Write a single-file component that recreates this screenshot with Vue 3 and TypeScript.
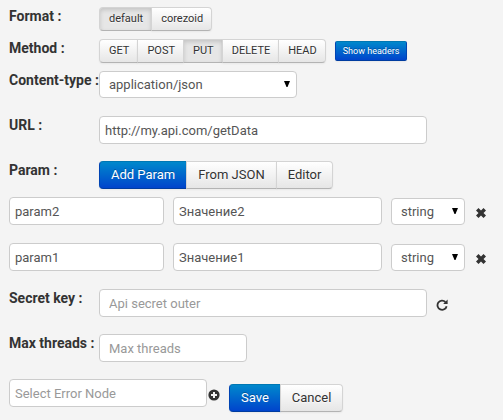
<script setup lang="ts">
import { ref } from 'vue'

interface Param {
  id: number
  name: string
  value: string
  type: string
}

const formats = ['default', 'corezoid']
const methods = ['GET', 'POST', 'PUT', 'DELETE', 'HEAD']
const types = ['string', 'number', 'boolean', 'object', 'array']

const format = ref('default')
const method = ref('PUT')
const contentType = ref('application/json')
const url = ref('http://my.api.com/getData')
const secret = ref('')
const maxThreads = ref('')
const errorNode = ref('')
const params = ref<Param[]>([
  { id: 2, name: 'param2', value: 'Значение2', type: 'string' },
  { id: 1, name: 'param1', value: 'Значение1', type: 'string' },
])

function addParam() {
  const id = Math.max(0, ...params.value.map((p) => p.id)) + 1
  params.value.unshift({ id, name: '', value: '', type: 'string' })
}

function removeParam(id: number) {
  params.value = params.value.filter((p) => p.id !== id)
}
</script>

<template>
  <form class="form" @submit.prevent>
    <div class="row tight">
      <span id="format-label" class="label">Format :</span>
      <div class="group small" role="group" aria-labelledby="format-label">
        <button
          v-for="f in formats"
          :key="f"
          type="button"
          class="btn"
          :class="{ active: f === format }"
          :aria-pressed="f === format"
          @click="format = f"
        >{{ f }}</button>
      </div>
    </div>

    <div class="row tight">
      <span id="method-label" class="label">Method :</span>
      <div class="group small" role="group" aria-labelledby="method-label">
        <button
          v-for="m in methods"
          :key="m"
          type="button"
          class="btn"
          :class="{ active: m === method }"
          :aria-pressed="m === method"
          @click="method = m"
        >{{ m }}</button>
      </div>
      <button type="button" class="btn primary mini">Show headers</button>
    </div>

    <div class="row">
      <label class="label" for="content-type">Content-type :</label>
      <div class="select content-type">
        <select id="content-type" v-model="contentType">
          <option>application/json</option>
          <option>application/xml</option>
        </select>
        <svg class="arrow" viewBox="0 0 6 6" aria-hidden="true"><path d="M0 0H6L3.5 6H2.5Z" /></svg>
      </div>
    </div>

    <div class="row">
      <label class="label" for="url">URL :</label>
      <input id="url" v-model="url" class="field wide" type="text" />
    </div>

    <div class="row params-head">
      <span id="param-label" class="label">Param :</span>
      <div class="group" role="group" aria-labelledby="param-label">
        <button type="button" class="btn primary" @click="addParam">Add Param</button>
        <button type="button" class="btn">From JSON</button>
        <button type="button" class="btn">Editor</button>
      </div>
    </div>

    <div v-for="p in params" :key="p.id" class="param">
      <input v-model="p.name" class="field name" type="text" aria-label="Name" />
      <input v-model="p.value" class="field value" type="text" aria-label="Value" />
      <div class="select type">
        <select v-model="p.type" aria-label="Type">
          <option v-for="t in types" :key="t">{{ t }}</option>
        </select>
        <svg class="arrow" viewBox="0 0 6 6" aria-hidden="true"><path d="M0 0H6L3.5 6H2.5Z" /></svg>
      </div>
      <button type="button" class="icon" aria-label="Remove" @click="removeParam(p.id)">
        <svg viewBox="0 0 12 12"><path d="M3.5 1 6 3.5 8.5 1 11 3.5 8.5 6 11 8.5 8.5 11 6 8.5 3.5 11 1 8.5 3.5 6 1 3.5Z" /></svg>
      </button>
    </div>

    <div class="row">
      <label class="label" for="secret">Secret key :</label>
      <input id="secret" v-model="secret" class="field wide indented" type="text" placeholder="Api secret outer" />
      <button type="button" class="icon refresh" aria-label="Refresh">
        <svg viewBox="0 0 12 12">
          <path d="M9.4 3A4.6 4.6 0 1 0 10.6 7.2" fill="none" stroke="#333" stroke-width="1.8" />
          <path d="M11.6 0.6V5H7.2Z" />
        </svg>
      </button>
    </div>

    <div class="row">
      <label class="label" for="threads">Max threads :</label>
      <input id="threads" v-model="maxThreads" class="field threads indented" type="text" placeholder="Max threads" />
    </div>

    <div class="footer">
      <input v-model="errorNode" class="field node" type="text" placeholder="Select Error Node" aria-label="Select Error Node" />
      <button type="button" class="icon add" aria-label="Add node">
        <svg viewBox="0 0 12 12">
          <circle cx="6" cy="6" r="5.6" />
          <path d="M6 3V9M3 6H9" fill="none" stroke="#f4f4f4" stroke-width="2" />
        </svg>
      </button>
      <div class="group actions">
        <button type="submit" class="btn primary">Save</button>
        <button type="button" class="btn">Cancel</button>
      </div>
    </div>
  </form>
</template>

<style>
body {
  margin: 0;
  background: #f4f4f4;
}
</style>

<style scoped>
.form {
  padding: 7px 9px;
  font: 13px/18px Roboto, "Liberation Sans", sans-serif;
  color: #333;
}

.row,
.param,
.footer {
  display: flex;
  align-items: flex-start;
  margin-bottom: 17px;
}

.row.tight {
  margin-bottom: 8px;
}

.row.params-head {
  margin-bottom: 8px;
}

.label {
  flex: 0 0 90px;
  font-size: 14px;
  font-weight: 700;
  white-space: nowrap;
}

.field,
select {
  box-sizing: border-box;
  width: 100%;
  height: 28px;
  margin: 0;
  padding: 0 5px;
  border: 1px solid #ccc;
  border-radius: 4px;
  background: #fff;
  color: #555;
  font: inherit;
}

.field {
  min-width: 0;
}

.field.indented {
  padding-left: 9px;
}

.field::placeholder {
  color: #999;
  opacity: 1;
}

select {
  display: block;
  height: 27px;
  padding: 0 16px 0 9px;
  appearance: none;
}

.select {
  position: relative;
}

.arrow {
  position: absolute;
  top: 10px;
  right: 7px;
  width: 6px;
  height: 6px;
  fill: #000;
  pointer-events: none;
}

.content-type {
  flex: 0 1 198px;
  margin-bottom: 1px;
}

.wide {
  flex: 0 1 328px;
}

.threads {
  flex: 0 1 148px;
}

.group {
  display: flex;
}

.btn {
  box-sizing: border-box;
  height: 28px;
  margin: 0;
  padding: 0 11px;
  border: 1px solid #d4d4d4;
  border-bottom-color: #b3b3b3;
  border-radius: 0;
  background: linear-gradient(#fff, #e6e6e6);
  box-shadow: 0 1px 2px rgba(0, 0, 0, 0.05);
  color: #333;
  font: inherit;
  text-shadow: 0 1px 1px rgba(255, 255, 255, 0.75);
  white-space: nowrap;
  cursor: pointer;
}

.group .btn + .btn {
  margin-left: -1px;
}

.group .btn:first-child {
  border-radius: 4px 0 0 4px;
}

.group .btn:last-child {
  border-radius: 0 4px 4px 0;
}

.small .btn {
  height: 24px;
  padding: 0 8px 0 9px;
  font-size: 11px;
}

.btn.active {
  background: #e6e6e6;
  box-shadow: inset 0 2px 4px rgba(0, 0, 0, 0.15);
}

.btn.primary {
  border-color: #0077b3 #0044b3 #003ca0;
  background: linear-gradient(#08c, #04c);
  color: #fff;
  text-shadow: 0 -1px 0 rgba(0, 0, 0, 0.25);
}

.btn.mini {
  height: 20px;
  margin: 2px 0 0 9px;
  padding: 0 7px;
  border-radius: 2px;
  font-size: 9px;
}

.param {
  gap: 9px;
  margin-bottom: 18px;
}

.name {
  flex: 0 1 155px;
}

.value {
  flex: 0 1 209px;
}

.type {
  flex: 0 0 74px;
  padding-top: 1px;
}

.type .arrow {
  top: 11px;
}

.icon {
  flex: none;
  width: 12px;
  height: 12px;
  margin: 0;
  padding: 0;
  border: 0;
  background: none;
  cursor: pointer;
}

.icon svg {
  display: block;
  width: 12px;
  height: 12px;
  fill: #333;
}

.param .icon {
  margin: 10px 0 0 1px;
}

.refresh {
  margin: 10px 0 0 9px;
}

.footer {
  margin-bottom: 0;
}

.node {
  flex: 0 1 198px;
}

.add {
  margin: 10px 0 0 1px;
}

.actions {
  margin: 5px 0 0 9px;
}
</style>
